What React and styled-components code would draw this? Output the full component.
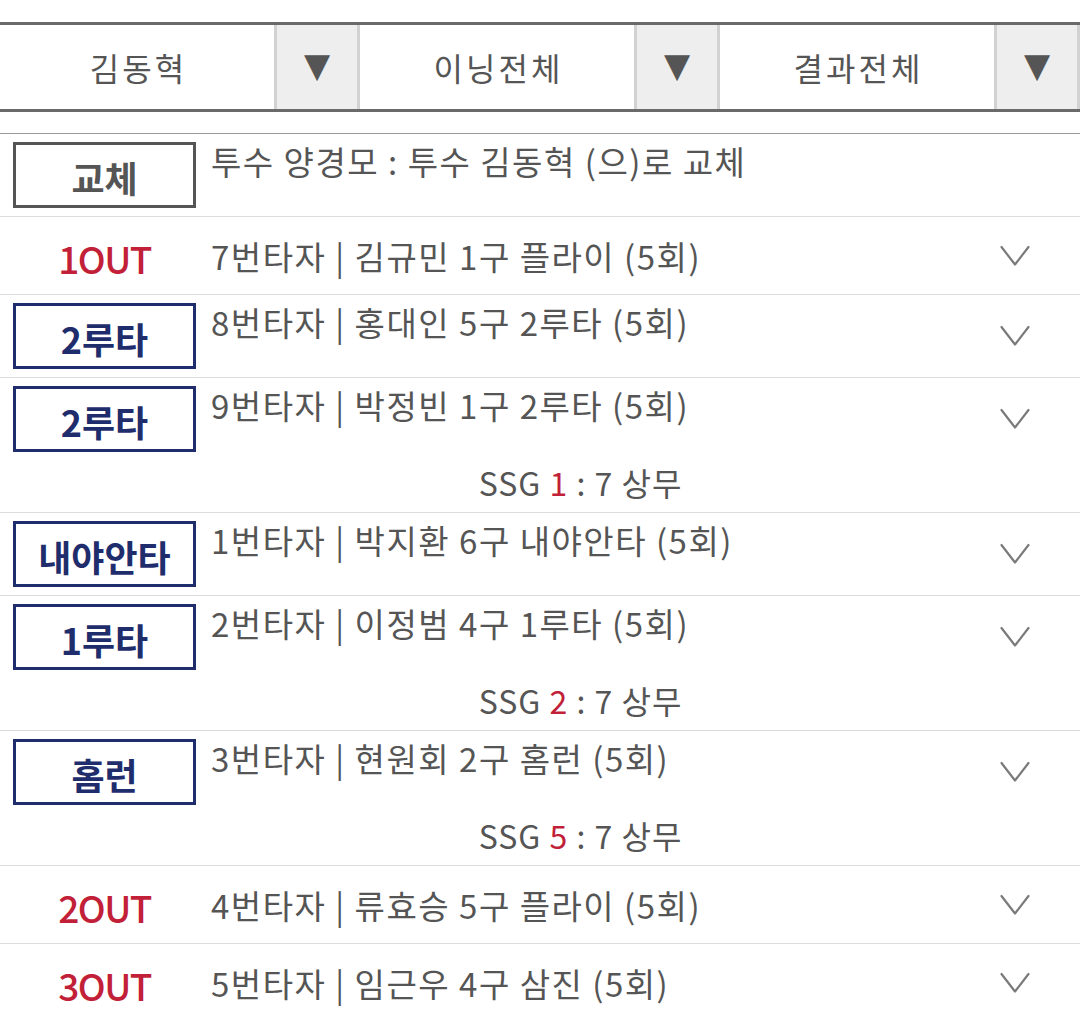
import React from 'react';
import styled, { createGlobalStyle } from 'styled-components';

const GlobalStyle = createGlobalStyle`
  body {
    margin: 0;
    background: #fff;
    font-family: "Noto Sans CJK KR", "Noto Sans", sans-serif;
    color: #555;
  }
`;

const filters = ['김동혁', '이닝전체', '결과전체'];

const plays = [
  { kind: 'change', label: '교체', text: '투수 양경모 : 투수 김동혁 (으)로 교체', noArrow: true },
  { kind: 'out', label: '1OUT', text: '7번타자 | 김규민 1구 플라이 (5회)' },
  { kind: 'hit', label: '2루타', text: '8번타자 | 홍대인 5구 2루타 (5회)' },
  { kind: 'hit', label: '2루타', text: '9번타자 | 박정빈 1구 2루타 (5회)', score: 1 },
  { kind: 'hit', label: '내야안타', text: '1번타자 | 박지환 6구 내야안타 (5회)' },
  { kind: 'hit', label: '1루타', text: '2번타자 | 이정범 4구 1루타 (5회)', score: 2 },
  { kind: 'hit', label: '홈런', text: '3번타자 | 현원회 2구 홈런 (5회)', score: 5 },
  { kind: 'out', label: '2OUT', text: '4번타자 | 류효승 5구 플라이 (5회)' },
  { kind: 'out', label: '3OUT', text: '5번타자 | 임근우 4구 삼진 (5회)' },
];

const Chevron = () => (
  <svg width="30" height="22" viewBox="0 0 30 22">
    <polyline points="1.5,2 15,19.5 28.5,2" fill="none" stroke="#7a7a7a" strokeWidth="2.2" strokeLinecap="round" strokeLinejoin="round" />
  </svg>
);

const App = () => {
  return (
    <Page>
      <GlobalStyle />
      <FilterBar>
        {filters.map(f => (
          <Filter key={f}>
            <FilterLabel>{f}</FilterLabel>
            <FilterArrow>▼</FilterArrow>
          </Filter>
        ))}
      </FilterBar>
      <List>
        {plays.map((p, i) => (
          <Row key={i} $out={p.kind === 'out'}>
            <Main $out={p.kind === 'out'}>
              <Lead>
                {p.kind === 'out' ? (
                  <OutLabel>{p.label}</OutLabel>
                ) : (
                  <Badge $gray={p.kind === 'change'}>{p.label}</Badge>
                )}
              </Lead>
              <Desc $out={p.kind === 'out'}>{p.text}</Desc>
              <Toggle>{!p.noArrow && <Chevron />}</Toggle>
            </Main>
            {p.score !== undefined && (
              <Score>
                SSG <em>{p.score}</em> : 7 상무
              </Score>
            )}
          </Row>
        ))}
      </List>
    </Page>
  );
};

const Page = styled.div`
  width: 1080px;
  padding-top: 22px;
`;

const FilterBar = styled.div`
  display: grid;
  grid-template-columns: repeat(3, 1fr);
  border-top: 3px solid #6a6a6a;
  border-bottom: 3px solid #6a6a6a;
  height: 84px;
`;

const Filter = styled.div`
  display: flex;
  align-items: stretch;
`;

const FilterLabel = styled.div`
  flex: 1;
  display: flex;
  align-items: center;
  justify-content: center;
  font-size: 32px;
  color: #555;
  letter-spacing: 3px;
  padding-left: 3px;
`;

const FilterArrow = styled.div`
  width: 86px;
  display: flex;
  align-items: center;
  justify-content: center;
  background: #eeeeee;
  border-left: 3px solid #d2d2d2;
  border-right: 3px solid #d2d2d2;
  color: #555;
  font-size: 34px;
  font-family: "DejaVu Sans", sans-serif;
  padding-bottom: 4px;
  box-sizing: border-box;
`;

const List = styled.div`
  margin-top: 21px;
  border-top: 1px solid #999;
`;

const Row = styled.div`
  padding: ${p => (p.$out ? '9px 0 8px' : '8px 0')};
  border-bottom: 1px solid #dcdcdc;
`;

const Main = styled.div`
  display: flex;
  align-items: ${p => (p.$out ? 'center' : 'flex-start')};
  height: ${p => (p.$out ? '60px' : '66px')};
`;

const Lead = styled.div`
  width: 183px;
  margin-left: 13px;
  flex-shrink: 0;
  display: flex;
  justify-content: center;
`;

const Badge = styled.div`
  width: 183px;
  height: 66px;
  box-sizing: border-box;
  border: 3px solid ${p => (p.$gray ? '#555' : '#1f2d6c')};
  color: ${p => (p.$gray ? '#555' : '#1f2d6c')};
  display: flex;
  align-items: center;
  justify-content: center;
  font-size: 36px;
  line-height: 1;
  font-weight: 700;
  padding-top: 3px;
`;

const OutLabel = styled.div`
  color: #c21f38;
  font-size: 37px;
  line-height: 1;
  font-weight: 500;
  letter-spacing: -1.5px;
  padding-top: 4px;
`;

const Desc = styled.div`
  flex: 1;
  margin-left: 15px;
  font-size: 33px;
  line-height: ${p => (p.$out ? '60px' : '38px')};
  color: #555;
  letter-spacing: 1.5px;
  white-space: nowrap;
`;

const Toggle = styled.div`
  width: 130px;
  display: flex;
  align-items: center;
  justify-content: center;
  align-self: center;
`;

const Score = styled.div`
  margin: 8px 130px 0 211px;
  height: 44px;
  line-height: 44px;
  text-align: center;
  font-size: 32px;
  letter-spacing: 1px;
  color: #555;

  em {
    font-style: normal;
    color: #c21f38;
  }
`;

export default App;
